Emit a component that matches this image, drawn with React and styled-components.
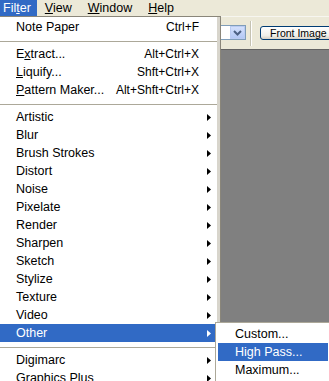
import React from 'react'
import styled, { createGlobalStyle } from 'styled-components'

const GlobalStyle = createGlobalStyle`
  html, body {
    margin: 0;
    padding: 0;
    overflow: hidden;
  }
  body {
    font-family: "Liberation Sans", Arial, sans-serif;
    font-size: 12px;
    color: #000;
  }
`

const topMenus = [
  { label: 'Fil', key: 't', rest: 'er', active: true },
  { label: '', key: 'V', rest: 'iew' },
  { label: '', key: 'W', rest: 'indow' },
  { label: '', key: 'H', rest: 'elp' },
]

const filterItems = [
  { label: 'Note Paper', shortcut: 'Ctrl+F' },
  { sep: true },
  { pre: 'E', key: 'x', label: 'tract...', shortcut: 'Alt+Ctrl+X' },
  { key: 'L', label: 'iquify...', shortcut: 'Shft+Ctrl+X' },
  { key: 'P', label: 'attern Maker...', shortcut: 'Alt+Shft+Ctrl+X' },
  { sep: true },
  { label: 'Artistic', sub: true },
  { label: 'Blur', sub: true },
  { label: 'Brush Strokes', sub: true },
  { label: 'Distort', sub: true },
  { label: 'Noise', sub: true },
  { label: 'Pixelate', sub: true },
  { label: 'Render', sub: true },
  { label: 'Sharpen', sub: true },
  { label: 'Sketch', sub: true },
  { label: 'Stylize', sub: true },
  { label: 'Texture', sub: true },
  { label: 'Video', sub: true },
  { label: 'Other', sub: true, active: true },
  { sep: true },
  { label: 'Digimarc', sub: true },
  { label: 'Graphics Plus', sub: true },
]

const otherItems = [
  { label: 'Custom...' },
  { label: 'High Pass...', active: true },
  { label: 'Maximum...' },
]

function Arrow({ $light }) {
  return (
    <ArrowIcon width="4" height="7" viewBox="0 0 4 7">
      <polygon points="0,0 4,3.5 0,7" fill={$light ? '#fff' : '#000'} />
    </ArrowIcon>
  )
}

export default function App() {
  return (
    <Window>
      <GlobalStyle />
      <MenuBar>
        {topMenus.map((m, i) => (
          <MenuBarItem key={i} $active={m.active}>
            {m.label}<u>{m.key}</u>{m.rest}
          </MenuBarItem>
        ))}
      </MenuBar>

      <Toolbar>
        <SelectBox>
          <SelectField />
          <SelectButton>
            <svg width="9" height="6" viewBox="0 0 9 6">
              <path d="M1 1 L4.5 4.5 L8 1" stroke="#4D6185" strokeWidth="2" fill="none" />
            </svg>
          </SelectButton>
        </SelectBox>
        <ToolDivider />
        <PushButton>Front Image</PushButton>
      </Toolbar>

      <Workspace />

      <DropMenu>
        {filterItems.map((it, i) =>
          it.sep ? (
            <Separator key={i} />
          ) : (
            <MenuRow key={i} $active={it.active}>
              <span>
                {it.pre}
                {it.key && <u>{it.key}</u>}
                {it.label}
              </span>
              <Shortcut>{it.shortcut}</Shortcut>
              <ArrowCell>{it.sub && <Arrow $light={it.active} />}</ArrowCell>
            </MenuRow>
          )
        )}
      </DropMenu>

      <SubMenu>
        {otherItems.map((it, i) => (
          <SubRow key={i} $active={it.active}>{it.label}</SubRow>
        ))}
      </SubMenu>
    </Window>
  )
}

const Window = styled.div`
  position: relative;
  width: 329px;
  height: 381px;
  overflow: hidden;
  display: flex;
  flex-direction: column;
  background: #ECE9D8;
`

const MenuBar = styled.div`
  height: 16px;
  display: flex;
  align-items: stretch;
  flex-shrink: 0;
`

const MenuBarItem = styled.div`
  padding: 0 8px;
  line-height: 16px;
  font-size: 12.5px;
  background: ${p => (p.$active ? '#316AC5' : 'transparent')};
  color: ${p => (p.$active ? '#fff' : '#000')};

  &:first-child {
    padding: 0 6px 0 3px;
  }
  u {
    text-underline-offset: 1px;
  }
`

const Toolbar = styled.div`
  height: 32px;
  flex-shrink: 0;
  border-top: 1px solid #F7F6F0;
  display: flex;
  align-items: center;
  padding-left: 150px;
`

const SelectBox = styled.div`
  display: flex;
  width: 96px;
  height: 15px;
  border: 1px solid #7F9DB9;
  background: #fff;
  box-sizing: border-box;
  margin-top: -1px;
  flex-shrink: 0;
`

const SelectField = styled.div`
  flex: 1;
`

const SelectButton = styled.div`
  width: 15px;
  display: flex;
  align-items: center;
  justify-content: center;
  background: linear-gradient(#D3E0FC, #B4C8F6);
  border: 1px solid #BACBF2;
  box-sizing: border-box;
`

const ToolDivider = styled.div`
  width: 1px;
  height: 25px;
  margin: 0 8px 0 4px;
  background: #C5C2B2;
  border-right: 1px solid #fff;
  flex-shrink: 0;
`

const PushButton = styled.div`
  flex-shrink: 0;
  width: 80px;
  height: 14px;
  box-sizing: border-box;
  border: 1px solid #003C74;
  border-radius: 3px;
  background: linear-gradient(#FFFFFF, #F0F0EA 70%, #D6D0C5);
  font-size: 10.5px;
  line-height: 12px;
  padding-left: 9px;
  white-space: nowrap;
`

const Workspace = styled.div`
  flex: 1;
  background: #808080;
  border-top: 1px solid #636363;
`

const DropMenu = styled.div`
  position: absolute;
  top: 16px;
  left: -2px;
  width: 223px;
  box-sizing: border-box;
  background: #fff;
  border: 1px solid #8A867A;
  padding: 1px 3px 1px 1px;
  box-shadow: inset -3px 0 0 #D8D5CC;
  z-index: 2;
`

const MenuRow = styled.div`
  display: grid;
  grid-template-columns: 1fr auto 18px;
  align-items: center;
  height: 18px;
  padding-left: 16px;
  font-size: 12.5px;
  line-height: 19px;
  white-space: nowrap;
  background: ${p => (p.$active ? '#316AC5' : 'transparent')};
  color: ${p => (p.$active ? '#fff' : '#000')};

  u {
    text-underline-offset: 1px;
  }
`

const Shortcut = styled.span`
  text-align: right;
  font-size: 12px;
`

const ArrowCell = styled.span`
  display: flex;
  align-items: center;
  padding-left: 8px;
`

const ArrowIcon = styled.svg`
  display: block;
`

const Separator = styled.div`
  height: 1px;
  margin: 5px 0 3px;
  background: #ACA899;
`

const SubMenu = styled.div`
  position: absolute;
  top: 322px;
  left: 215px;
  width: 116px;
  box-sizing: border-box;
  background: #fff;
  border: 1px solid #ACA899;
  padding: 2px;
  z-index: 3;
`

const SubRow = styled.div`
  height: 18px;
  line-height: 19px;
  padding-left: 17px;
  font-size: 12.5px;
  white-space: nowrap;
  background: ${p => (p.$active ? '#316AC5' : 'transparent')};
  color: ${p => (p.$active ? '#fff' : '#000')};
`
